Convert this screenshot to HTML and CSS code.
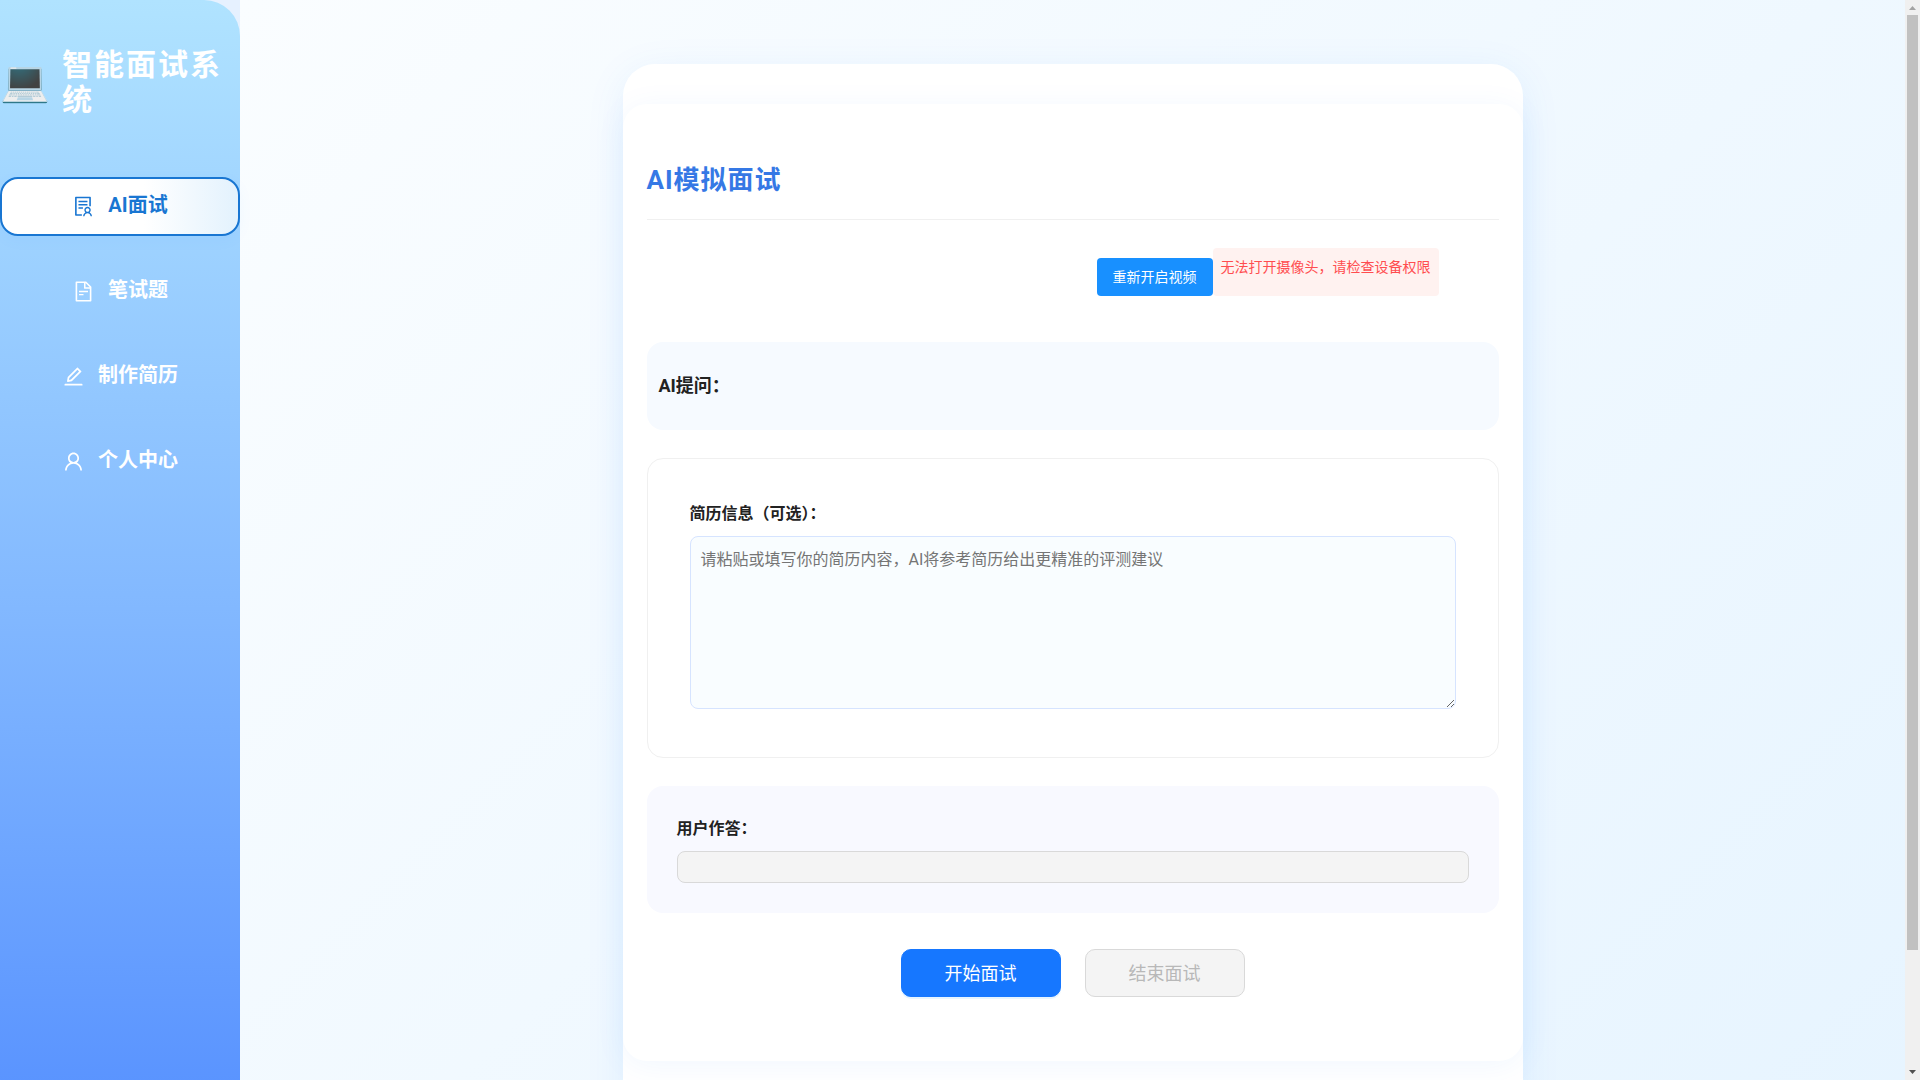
FILE: index.html
```html
<!DOCTYPE html>
<html lang="zh-CN">
<head>
<meta charset="utf-8">
<meta name="viewport" content="width=device-width, initial-scale=1">
<title>智能面试系统</title>
<link rel="stylesheet" href="styles.css">
</head>
<body>
<div class="window">
<div class="layout">
  <aside class="sidebar">
    <div class="brand">
      <span class="brand-icon" aria-hidden="true">💻</span>
      <span class="brand-name">智能面试系统</span>
    </div>
    <nav class="menu">
      <a class="menu-item active" href="#interview">
        <svg class="icon" viewBox="0 0 1024 1024" aria-hidden="true"><path d="M688 264c0-4.4-3.6-8-8-8H296c-4.4 0-8 3.6-8 8v48c0 4.4 3.6 8 8 8h384c4.4 0 8-3.6 8-8v-48zm-8 136H296c-4.4 0-8 3.6-8 8v48c0 4.4 3.6 8 8 8h384c4.4 0 8-3.6 8-8v-48c0-4.4-3.6-8-8-8zM480 544H296c-4.4 0-8 3.6-8 8v48c0 4.4 3.6 8 8 8h184c4.4 0 8-3.6 8-8v-48c0-4.4-3.6-8-8-8zm-48 308H208V148h560v344c0 4.4 3.6 8 8 8h56c4.4 0 8-3.6 8-8V108c0-17.7-14.3-32-32-32H168c-17.7 0-32 14.3-32 32v784c0 17.7 14.3 32 32 32h264c4.4 0 8-3.6 8-8v-56c0-4.4-3.6-8-8-8zm356.8-74.4c29-26.3 47.2-64.3 47.2-106.6 0-79.5-64.5-144-144-144s-144 64.5-144 144c0 42.3 18.2 80.3 47.2 106.6-57 32.5-96.2 92.7-99.2 162.1-.2 4.5 3.5 8.3 8 8.3h48.1c4.2 0 7.7-3.3 8-7.6C564 871.2 621.7 816 692 816s128 55.2 131.9 124.4c.2 4.2 3.7 7.6 8 7.6H880c4.6 0 8.2-3.8 8-8.3-2.9-69.5-42.2-129.6-99.2-162.1zM692 591c44.2 0 80 35.8 80 80s-35.8 80-80 80-80-35.8-80-80 35.8-80 80-80z"/></svg>
        <span class="menu-text">AI面试</span>
      </a>
      <a class="menu-item" href="#written">
        <svg class="icon" viewBox="0 0 1024 1024" aria-hidden="true"><path d="M854.6 288.6L639.4 73.4c-6-6-14.1-9.4-22.6-9.4H192c-17.7 0-32 14.3-32 32v832c0 17.7 14.3 32 32 32h640c17.7 0 32-14.3 32-32V311.3c0-8.5-3.4-16.7-9.4-22.7zM790.2 326H602V137.8L790.2 326zm1.8 562H232V136h302v216a42 42 0 0042 42h216v494zM504 618H320c-4.4 0-8 3.6-8 8v48c0 4.4 3.6 8 8 8h184c4.4 0 8-3.6 8-8v-48c0-4.4-3.6-8-8-8zM312 490v48c0 4.4 3.6 8 8 8h384c4.4 0 8-3.6 8-8v-48c0-4.4-3.6-8-8-8H320c-4.4 0-8 3.6-8 8z"/></svg>
        <span class="menu-text">笔试题</span>
      </a>
      <a class="menu-item" href="#resume-maker">
        <svg class="icon" viewBox="0 0 1024 1024" aria-hidden="true"><path d="M257.7 752c2 0 4-.2 6-.5L431.9 722c2-.4 3.9-1.3 5.3-2.8l423.9-423.9a9.96 9.96 0 000-14.1L694.9 114.9c-1.9-1.9-4.4-2.9-7.1-2.9s-5.2 1-7.1 2.9L256.8 538.8c-1.5 1.5-2.4 3.3-2.8 5.3l-29.5 168.2a33.5 33.5 0 009.4 29.8c6.6 6.4 14.9 9.9 23.8 9.9zm67.4-174.4L687.8 215l73.3 73.3-362.7 362.6-88.9 15.7 15.6-89zM880 836H144c-17.7 0-32 14.3-32 32v36c0 4.4 3.6 8 8 8h784c4.4 0 8-3.6 8-8v-36c0-17.7-14.3-32-32-32z"/></svg>
        <span class="menu-text">制作简历</span>
      </a>
      <a class="menu-item" href="#profile">
        <svg class="icon" viewBox="0 0 1024 1024" aria-hidden="true"><path d="M858.5 763.6a374 374 0 00-80.6-119.5 375.63 375.63 0 00-119.5-80.6c-.4-.2-.8-.3-1.2-.5C719.5 518 760 444.7 760 362c0-137-111-248-248-248S264 225 264 362c0 82.7 40.5 156 102.8 201.1-.4.2-.8.3-1.2.5-44.8 18.9-85 46-119.5 80.6a375.63 375.63 0 00-80.6 119.5A371.7 371.7 0 00136 901.8a8 8 0 008 8.2h60c4.4 0 7.9-3.5 8-7.8 2-77.2 33-149.5 87.8-204.3 56.7-56.7 132-87.9 212.2-87.9s155.5 31.2 212.2 87.9C779 752.7 810 825 812 902.2c.1 4.4 3.6 7.8 8 7.8h60a8 8 0 008-8.2c-1-47.8-10.9-94.3-29.5-138.2zM512 534c-45.9 0-89.1-17.9-121.6-50.4S340 407.9 340 362c0-45.9 17.9-89.1 50.4-121.6S466.1 190 512 190s89.1 17.9 121.6 50.4S684 316.1 684 362c0 45.9-17.9 89.1-50.4 121.6S557.9 534 512 534z"/></svg>
        <span class="menu-text">个人中心</span>
      </a>
    </nav>
  </aside>
  <main class="content">
    <div class="shell">
      <section class="card">
        <h2 class="title">AI模拟面试</h2>
        <div class="video-row">
          <button class="retry" type="button">重新开启视频</button>
          <div class="error" role="alert">无法打开摄像头，请检查设备权限</div>
        </div>
        <div class="question">AI提问：</div>
        <div class="resume">
          <label class="label" for="resume">简历信息（可选）：</label>
          <textarea class="field resume-field" id="resume" placeholder="请粘贴或填写你的简历内容，AI将参考简历给出更精准的评测建议"></textarea>
        </div>
        <div class="answer">
          <label class="label" for="answer">用户作答：</label>
          <textarea class="field answer-field" id="answer" rows="1" disabled></textarea>
        </div>
        <div class="actions">
          <button class="action primary" type="button">开始面试</button>
          <button class="action" type="button" disabled>结束面试</button>
        </div>
      </section>
    </div>
  </main>
</div>
<div class="scrollbar" aria-hidden="true">
  <svg class="arrow arrow-up" viewBox="0 0 15 15"><path d="M4 10L7.5 6L11 10z"/></svg>
  <div class="track"><div class="thumb"></div></div>
  <svg class="arrow" viewBox="0 0 15 15"><path d="M4 5L7.5 9L11 5z"/></svg>
</div>
</div>
</body>
</html>
```
FILE: styles.css
```css
* {
  box-sizing: border-box;
}

body {
  margin: 0;
  color: #222;
  font-family: Roboto, "Noto Sans CJK SC", sans-serif;
  font-size: 16px;
  line-height: 24px;
}

button,
textarea {
  font-family: inherit;
}

.window {
  display: flex;
  height: 100vh;
}

.layout {
  display: grid;
  grid-template-columns: 240px minmax(0, 1fr);
  flex: 1;
  min-width: 0;
  overflow-y: auto;
  scrollbar-width: none;
  background: #e6f1ff;
}

.scrollbar {
  display: flex;
  flex: none;
  flex-direction: column;
  width: 15px;
  background: #f0f0f0;
}

.arrow {
  flex: none;
  width: 15px;
  height: 15px;
  fill: #505050;
}

.arrow-up {
  fill: #a3a3a3;
}

.track {
  flex: 1;
  padding: 0 2px;
}

.thumb {
  height: 89%;
  background: #c1c1c1;
}

.sidebar {
  position: relative;
  z-index: 1;
  padding-top: 47px;
  border-radius: 0 36px 36px 0;
  background: linear-gradient(180deg, #b0e3ff 0%, #82b8ff 50%, #4f8aff 100%);
}

.brand {
  display: flex;
  align-items: center;
  gap: 12px;
  margin-bottom: 60px;
  color: #fff;
}

.brand-icon {
  font-size: 40px;
  line-height: 44px;
}

.brand-name {
  font-size: 30px;
  font-weight: 700;
  line-height: 35px;
  letter-spacing: 2px;
}

.menu {
  display: flex;
  flex-direction: column;
  gap: 26px;
}

.menu-item {
  display: flex;
  align-items: center;
  justify-content: center;
  gap: 13px;
  height: 59px;
  border: 2px solid transparent;
  border-radius: 18px;
  color: #fff;
  font-size: 20px;
  font-weight: 700;
  text-decoration: none;
}

.menu-item.active {
  border-color: #1976d2;
  background: linear-gradient(90deg, #fff 60%, #e3f2fd 100%);
  box-shadow: 0 4px 16px rgba(22, 119, 255, 0.04);
  color: #1976d2;
}

.menu-text {
  padding-bottom: 3px;
}

.icon {
  width: 23px;
  height: 23px;
  fill: currentColor;
}

.content {
  padding: 64px 24px;
  background: linear-gradient(135deg, #fafdff 0%, #e6f4ff 100%);
}

.shell {
  max-width: 900px;
  margin: 0 auto;
  padding: 40px 0 92px;
  border-radius: 32px;
  background: #fff;
  box-shadow: 0 8px 40px rgba(22, 119, 255, 0.08);
}

.card {
  padding: 57px 24px 64px;
  border-radius: 24px;
  background: #fff;
  box-shadow: 0 4px 32px rgba(22, 119, 255, 0.06);
}

.title {
  margin: 0 0 28px;
  padding-bottom: 19px;
  border-bottom: 1px solid #f0f0f0;
  color: #3578e5;
  font-size: 26px;
  font-weight: 700;
  line-height: 39px;
  letter-spacing: 1px;
}

.video-row {
  display: flex;
  justify-content: flex-end;
  margin-bottom: 46px;
  padding-right: 60px;
  font-size: 14px;
  line-height: 22px;
}

.retry {
  margin-top: 10px;
  padding: 8px 16px;
  border: 0;
  border-radius: 4px;
  background: #1890ff;
  color: #fff;
  font-size: 14px;
  line-height: 22px;
}

.error {
  padding: 8px;
  border-radius: 4px;
  background: #fff2f0;
  color: #ff4d4f;
}

.question {
  margin-bottom: 28px;
  padding: 30px 12px;
  border-radius: 16px;
  background: #f6faff;
  font-size: 18px;
  font-weight: 700;
  line-height: 28px;
}

.resume {
  margin-bottom: 28px;
  padding: 42px 42px 48px;
  border: 1px solid #f0f0f0;
  border-radius: 16px;
}

.label {
  display: block;
  margin-bottom: 10px;
  font-weight: 700;
  line-height: 25px;
}

.field {
  display: block;
  width: 100%;
  padding: 10px;
  border: 1px solid #d6e4ff;
  border-radius: 8px;
  background: #f9fdff;
  font-size: 16px;
  line-height: 26px;
}

.field::placeholder {
  color: #757575;
}

.resume-field {
  height: 173px;
  resize: vertical;
}

.answer {
  padding: 30px;
  border-radius: 16px;
  background: #f8f9ff;
}

.answer-field {
  height: 32px;
  padding: 2px 10px;
  border-color: #d9d9d9;
  background: #f4f4f4;
  resize: none;
}

.actions {
  display: flex;
  justify-content: center;
  gap: 24px;
  margin-top: 36px;
}

.action {
  width: 160px;
  height: 48px;
  padding: 0 0 2px;
  border: 1px solid #d9d9d9;
  border-radius: 10px;
  background: #f4f4f4;
  color: #b8b8b8;
  font-size: 18px;
}

.primary {
  border-color: #1677ff;
  background: #1677ff;
  box-shadow: 0 2px 0 rgba(5, 145, 255, 0.1);
  color: #fff;
}
```
